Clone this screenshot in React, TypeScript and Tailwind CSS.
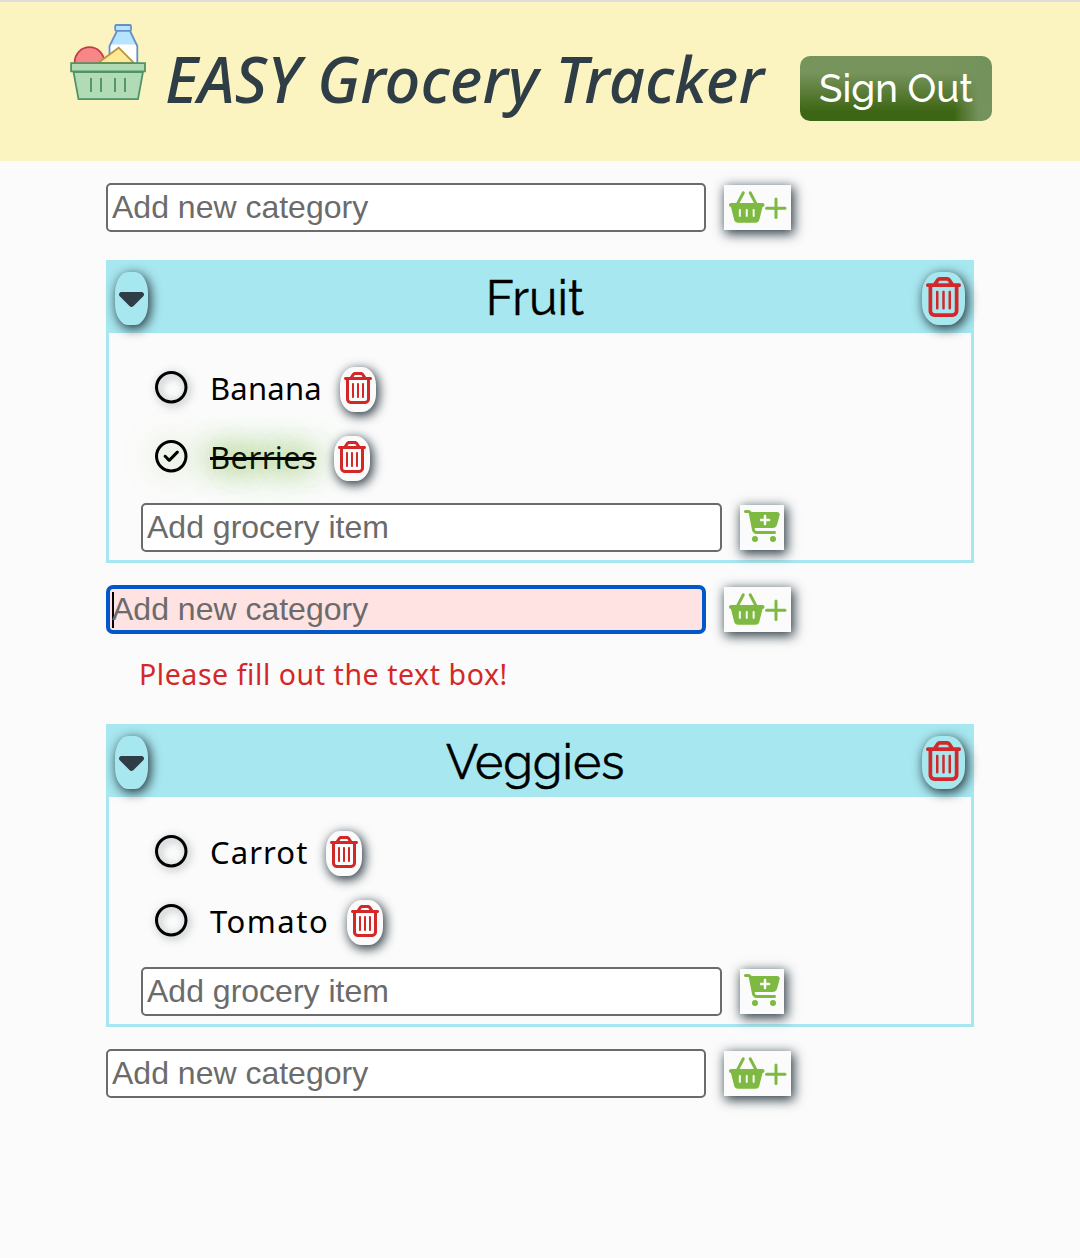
import React from "react";
import {
  FaBasketShopping,
  FaCaretDown,
  FaCartPlus,
  FaRegCircle,
  FaRegCircleCheck,
  FaRegTrashCan,
} from "react-icons/fa6";

const lift = "shadow-[2px_3px_11px_1px_#2f3e46]";

function Logo() {
  return (
    <svg className="h-[77px] w-[76px] shrink-0" viewBox="0 0 76 77" fill="none">
      <path d="M46 7h14l7.700 15V39H38.700V22z" fill="#fff" />
      <path d="M46.500 7h13l6.700 13.500H40.200z" fill="#b6e3ff" />
      <path d="M47 7l-7.500 15v17M60 7l7.300 15v17" stroke="#6590c6" strokeWidth="1.800" />
      <rect x="45.200" y="1" width="15.800" height="5.900" rx="1.200" fill="#b6e3ff" stroke="#6590c6" strokeWidth="1.800" />
      <circle cx="19.500" cy="38" r="14.800" fill="#f78787" stroke="#c73d45" strokeWidth="1.800" />
      <path d="M28 39L48.700 23.700 64 39z" fill="#ffe997" stroke="#b9963e" strokeWidth="1.800" />
      <path d="M3.500 48H73L68 75.200H8.500z" fill="#b0dbb4" stroke="#509367" strokeWidth="1.800" />
      <path d="M1.100 39.100H75v8.200H1.100z" fill="#b0dbb4" stroke="#509367" strokeWidth="1.800" />
      <path d="M21 54v14M31 54v14M45 54v14M55 54v14" stroke="#509367" strokeWidth="1.900" />
    </svg>
  );
}

function TextBox({ placeholder, wide, error }: { placeholder: string; wide?: boolean; error?: boolean }) {
  return (
    <div
      className={`relative flex h-[49px] items-center font-['Liberation_Sans',sans-serif] text-[32px] leading-none text-[#6b6b6b] ${
        wide ? "w-[600px]" : "w-[581px]"
      } ${
        error
          ? "rounded-[7px] border-4 border-[#0257c9] bg-[#ffe2e2] pl-0.5"
          : "rounded-[5px] border-2 border-[#6b6b6b] bg-white pl-1"
      }`}
    >
      {error && <span className="absolute top-[3px] left-[2px] h-9 w-0.5 bg-black" />}
      <span className="-translate-y-px">{placeholder}</span>
    </div>
  );
}

function AddCategory({ error }: { error?: boolean }) {
  return (
    <div className="flex h-[49px] items-start gap-[18px]">
      <TextBox placeholder="Add new category" wide error={error} />
      <button className={`mt-0.5 flex h-[45px] w-[67px] items-center bg-[#fbfbfb] pl-[5px] text-[#7eba41] ${lift}`}>
        <FaBasketShopping className="mt-[-2px] h-8 w-[35.500px] shrink-0" />
        <svg className="h-[22px] w-[22px] shrink-0" viewBox="0 0 22 22">
          <path d="M11 2v18.500M1.500 11.300h18.500" stroke="currentColor" strokeWidth="3" strokeLinecap="round" />
        </svg>
      </button>
    </div>
  );
}

type Item = { name: string; box: string; done?: boolean };

function Category({ title, items }: { title: string; items: Item[] }) {
  return (
    <section className="h-[303px] w-[868px] border-[3px] border-[#a7e8f0]">
      <header className="flex h-[70px] items-center justify-between bg-[#a7e8f0] px-[6px]">
        <button className={`flex h-[53px] w-[33px] items-center justify-center rounded-[40%] text-[#2f3e46] ${lift}`}>
          <FaCaretDown className="mt-[-2px] h-10 w-[25px]" />
        </button>
        <h2 className="font-['Raleway','Lato',sans-serif] text-[48px] leading-none whitespace-nowrap text-black [-webkit-text-stroke:0.4px_black]">
          {title}
        </h2>
        <button className={`flex h-[53px] w-[43px] items-center justify-center rounded-[40%] text-[#d32828] ${lift}`}>
          <FaRegTrashCan className="mt-[-2px] mr-px h-10 w-[35px]" />
        </button>
      </header>
      <ul className="mt-[22px] pl-[46px]">
        {items.map((item) => (
          <li key={item.name} className="flex h-[69px] items-center text-black">
            {item.done ? (
              <FaRegCircleCheck className="mt-[-4px] size-[32.500px] drop-shadow-[0_0_14px_#7eba4188]" />
            ) : (
              <FaRegCircle className="mt-[-4px] size-[32.500px] drop-shadow-[2px_2px_4px_#2f3e4680]" />
            )}
            <span
              className={`-mt-1 ml-[22.500px] font-['Noto_Sans',sans-serif] text-[31px] leading-[44px] whitespace-nowrap ${item.box} ${
                item.done
                  ? "line-through decoration-[3px] [text-shadow:0_0_24px_#7eba4180,0_0_36px_#7eba41]"
                  : ""
              }`}
            >
              {item.name}
            </span>
            <button className={`ml-[18px] flex h-[45px] w-9 items-center justify-center rounded-[40%] bg-[#fbfbfb] text-[#d32828] ${lift}`}>
              <FaRegTrashCan className="mt-[-3px] h-8 w-7" />
            </button>
          </li>
        ))}
      </ul>
      <div className="mt-[10px] ml-8 flex items-start gap-[18px]">
        <TextBox placeholder="Add grocery item" />
        <button className={`mt-0.5 flex h-[45px] w-[44px] items-center justify-center bg-[#fbfbfb] text-[#7eba41] ${lift}`}>
          <FaCartPlus className="mt-[-3px] h-8 w-9" />
        </button>
      </div>
    </section>
  );
}

export default function App() {
  return (
    <div className="h-[1258px] w-[1080px] overflow-hidden bg-[#fbfbfb]">
      <header className="flex h-[161px] items-start border-t-2 border-[#dedede] bg-[#fcf4c0] pl-[70px]">
        <div className="mt-[22px]">
          <Logo />
        </div>
        <h1 className="mt-[37px] ml-[19px] w-[635px] font-['Noto_Sans',sans-serif] text-[63px] leading-[80px] font-medium tracking-[0.150px] whitespace-nowrap text-[#2f3e46] italic">
          EASY Grocery Tracker
        </h1>
        <button className="mt-[54px] flex h-[65px] w-48 items-center justify-center rounded-[10px] bg-[#3d6614] bg-[linear-gradient(to_right,transparent_80%,#74925b_93%),linear-gradient(to_bottom,#78945d_25%,#3d6614_85%)] font-['Raleway','Lato',sans-serif] text-[38.400px] font-medium whitespace-nowrap text-white">
          Sign Out
        </button>
      </header>
      <main className="flex flex-col pt-[22px] pl-[106px]">
        <AddCategory />
        <div className="h-7" />
        <Category
          title="Fruit"
          items={[
            { name: "Banana", box: "w-[112px] tracking-[0.200px]" },
            { name: "Berries", box: "w-[106px] tracking-[0.400px]", done: true },
          ]}
        />
        <div className="h-[22px]" />
        <AddCategory error />
        <p className="mt-[18px] mb-7 ml-[33px] h-11 font-['Noto_Sans',sans-serif] text-[28.500px] leading-[44px] tracking-[0.560px] text-[#d32828]">
          Please fill out the text box!
        </p>
        <Category
          title="Veggies"
          items={[
            { name: "Carrot", box: "w-[98px] tracking-[1.100px]" },
            { name: "Tomato", box: "w-[119px] tracking-[1.500px]" },
          ]}
        />
        <div className="h-[22px]" />
        <AddCategory />
      </main>
    </div>
  );
}
